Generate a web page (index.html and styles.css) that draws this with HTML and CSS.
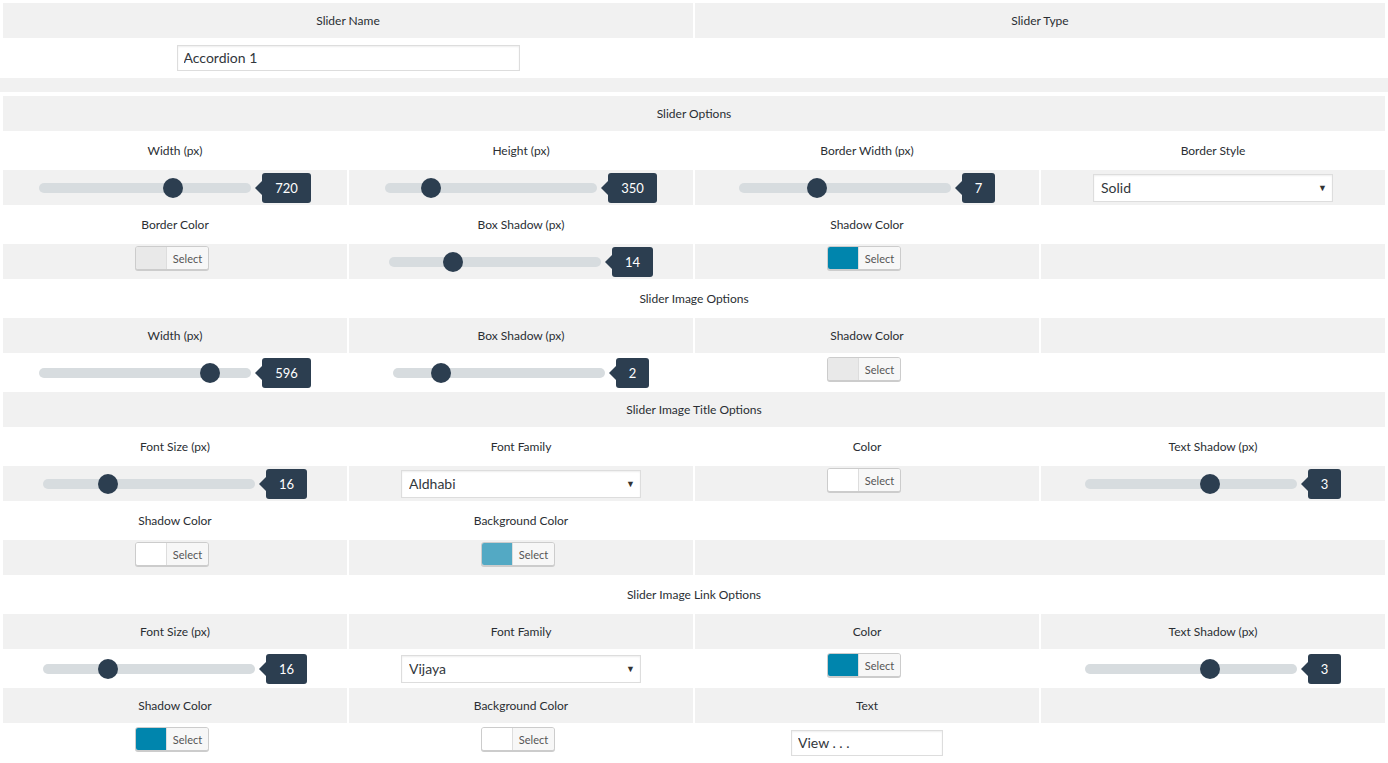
FILE: index.html
```html
<!DOCTYPE html>
<html>
<head>
<meta charset="utf-8">
<title>Slider Settings</title>
<link rel="stylesheet" href="styles.css">
</head>
<body>
<div class="page">
  <div class="table">
    <div class="row two">
      <div class="cell">Slider Name</div>
      <div class="cell">Slider Type</div>
    </div>
    <div class="row two">
      <div class="cell"><input class="txt name" type="text" value="Accordion 1"></div>
      <div class="cell"></div>
    </div>
  </div>

  <div class="band"></div>

  <div class="table main">
    <div class="row"><div class="cell span4">Slider Options</div></div>
    <div class="row">
      <div class="cell">Width (px)</div>
      <div class="cell">Height (px)</div>
      <div class="cell">Border Width (px)</div>
      <div class="cell">Border Style</div>
    </div>
    <div class="row">
      <div class="cell"><div class="slider"><div class="track"><span class="thumb" style="left:124px"></span></div><span class="val">720</span></div></div>
      <div class="cell"><div class="slider"><div class="track"><span class="thumb" style="left:36px"></span></div><span class="val">350</span></div></div>
      <div class="cell"><div class="slider"><div class="track"><span class="thumb" style="left:68px"></span></div><span class="val">7</span></div></div>
      <div class="cell"><span class="selectwrap"><select class="sel-box"><option>Solid</option></select></span></div>
    </div>
    <div class="row">
      <div class="cell">Border Color</div>
      <div class="cell">Box Shadow (px)</div>
      <div class="cell">Shadow Color</div>
      <div class="cell"></div>
    </div>
    <div class="row">
      <div class="cell"><span class="picker"><span class="sw c-gray"></span><span class="pick-txt">Select</span></span></div>
      <div class="cell"><div class="slider"><div class="track"><span class="thumb" style="left:54px"></span></div><span class="val">14</span></div></div>
      <div class="cell"><span class="picker"><span class="sw c-blue"></span><span class="pick-txt">Select</span></span></div>
      <div class="cell"></div>
    </div>

    <div class="row"><div class="cell span4">Slider Image Options</div></div>
    <div class="row">
      <div class="cell">Width (px)</div>
      <div class="cell">Box Shadow (px)</div>
      <div class="cell">Shadow Color</div>
      <div class="cell"></div>
    </div>
    <div class="row">
      <div class="cell"><div class="slider"><div class="track"><span class="thumb" style="left:161px"></span></div><span class="val">596</span></div></div>
      <div class="cell"><div class="slider"><div class="track"><span class="thumb" style="left:38px"></span></div><span class="val">2</span></div></div>
      <div class="cell"><span class="picker"><span class="sw c-gray"></span><span class="pick-txt">Select</span></span></div>
      <div class="cell"></div>
    </div>

    <div class="row"><div class="cell span4">Slider Image Title Options</div></div>
    <div class="row">
      <div class="cell">Font Size (px)</div>
      <div class="cell">Font Family</div>
      <div class="cell">Color</div>
      <div class="cell">Text Shadow (px)</div>
    </div>
    <div class="row">
      <div class="cell"><div class="slider"><div class="track"><span class="thumb" style="left:55px"></span></div><span class="val">16</span></div></div>
      <div class="cell"><span class="selectwrap"><select class="sel-box"><option>Aldhabi</option></select></span></div>
      <div class="cell"><span class="picker"><span class="sw c-white"></span><span class="pick-txt">Select</span></span></div>
      <div class="cell"><div class="slider"><div class="track"><span class="thumb" style="left:115px"></span></div><span class="val">3</span></div></div>
    </div>
    <div class="row">
      <div class="cell">Shadow Color</div>
      <div class="cell">Background Color</div>
      <div class="cell span2"></div>
    </div>
    <div class="row">
      <div class="cell"><span class="picker"><span class="sw c-white"></span><span class="pick-txt">Select</span></span></div>
      <div class="cell"><span class="picker"><span class="sw c-teal"></span><span class="pick-txt">Select</span></span></div>
      <div class="cell span2"></div>
    </div>

    <div class="row"><div class="cell span4">Slider Image Link Options</div></div>
    <div class="row">
      <div class="cell">Font Size (px)</div>
      <div class="cell">Font Family</div>
      <div class="cell">Color</div>
      <div class="cell">Text Shadow (px)</div>
    </div>
    <div class="row">
      <div class="cell"><div class="slider"><div class="track"><span class="thumb" style="left:55px"></span></div><span class="val">16</span></div></div>
      <div class="cell"><span class="selectwrap"><select class="sel-box"><option>Vijaya</option></select></span></div>
      <div class="cell"><span class="picker"><span class="sw c-blue"></span><span class="pick-txt">Select</span></span></div>
      <div class="cell"><div class="slider"><div class="track"><span class="thumb" style="left:115px"></span></div><span class="val">3</span></div></div>
    </div>
    <div class="row">
      <div class="cell">Shadow Color</div>
      <div class="cell">Background Color</div>
      <div class="cell">Text</div>
      <div class="cell"></div>
    </div>
    <div class="row">
      <div class="cell"><span class="picker"><span class="sw c-blue"></span><span class="pick-txt">Select</span></span></div>
      <div class="cell"><span class="picker"><span class="sw c-white"></span><span class="pick-txt">Select</span></span></div>
      <div class="cell"><input class="txt short" type="text" value="View . . ."></div>
      <div class="cell"></div>
    </div>
  </div>
</div>
</body>
</html>
```

FILE: styles.css
```css
* { box-sizing: border-box; }
html, body { margin: 0; padding: 0; background: #fff; }
body {
  font-family: Lato, "Open Sans", sans-serif;
  font-size: 12px;
  color: #2a2e33;
  overflow: hidden;
}
.page { padding: 3px 3px 0; }

.table { display: flex; flex-direction: column; gap: 2px; }
.row {
  display: grid;
  grid-template-columns: repeat(4, 1fr);
  column-gap: 2px;
  height: 35px;
}
.row.two { grid-template-columns: repeat(2, 1fr); }
.cell {
  display: flex;
  align-items: center;
  justify-content: center;
  min-width: 0;
}
.table .row:nth-child(odd) .cell { background: #f1f1f1; }
.span4 { grid-column: 1 / -1; }
.span2 { grid-column: span 2; }

.band {
  height: 14px;
  margin: 3px -3px 4px;
  background: #f1f1f1;
}

/* text inputs */
.txt {
  height: 26px;
  border: 1px solid #ddd;
  box-shadow: inset 0 1px 2px rgba(0,0,0,0.07);
  background: #fff;
  font-family: Lato, "Open Sans", sans-serif;
  font-size: 14px;
  color: #32373c;
  padding: 0 6px;
  outline: none;
}
.txt.name { width: 343px; }
.txt.short { width: 152px; }

/* slider */
.slider { display: flex; align-items: center; }
.track {
  position: relative;
  width: 212px;
  height: 10px;
  border-radius: 5px;
  background: #d7dcdf;
}
.thumb {
  position: absolute;
  top: -5px;
  width: 20px;
  height: 20px;
  border-radius: 50%;
  background: #2c3e50;
}
.val {
  position: relative;
  margin-left: 11px;
  height: 30px;
  line-height: 30px;
  padding: 0 13px;
  border-radius: 3px;
  background: #2c3e50;
  color: #fff;
  font-size: 13px;
}
.val::before {
  content: "";
  position: absolute;
  left: -7px;
  top: 8px;
  border-top: 7px solid transparent;
  border-bottom: 7px solid transparent;
  border-right: 7px solid #2c3e50;
}

/* select */
.selectwrap { position: relative; display: inline-block; }
.sel-box {
  -webkit-appearance: none;
  appearance: none;
  width: 240px;
  height: 28px;
  border: 1px solid #ddd;
  box-shadow: inset 0 1px 2px rgba(0,0,0,0.07);
  border-radius: 0;
  background: #fff;
  font-family: Lato, "Open Sans", sans-serif;
  font-size: 14px;
  color: #32373c;
  padding: 0 7px;
  outline: none;
}
.selectwrap::after {
  content: "\25BC";
  position: absolute;
  right: 6px;
  top: 8px;
  font-size: 9px;
  color: #333;
  pointer-events: none;
}

/* color picker */
.picker {
  display: inline-flex;
  height: 24px;
  margin: 0 6px 7px 0;
  border: 1px solid #ccc;
  border-radius: 3px;
  box-shadow: 0 1px 0 #ccc;
  overflow: hidden;
  background: #f7f7f7;
}
.sw { width: 30px; height: 100%; }
.pick-txt {
  display: flex;
  align-items: center;
  padding: 0 6px;
  border-left: 1px solid #ddd;
  background: #f7f7f7;
  color: #555;
  font-size: 11px;
}
.c-gray { background: #e9e9e9; }
.c-blue { background: #0085ad; }
.c-white { background: #fff; }
.c-teal { background: #53a9c4; }
```
